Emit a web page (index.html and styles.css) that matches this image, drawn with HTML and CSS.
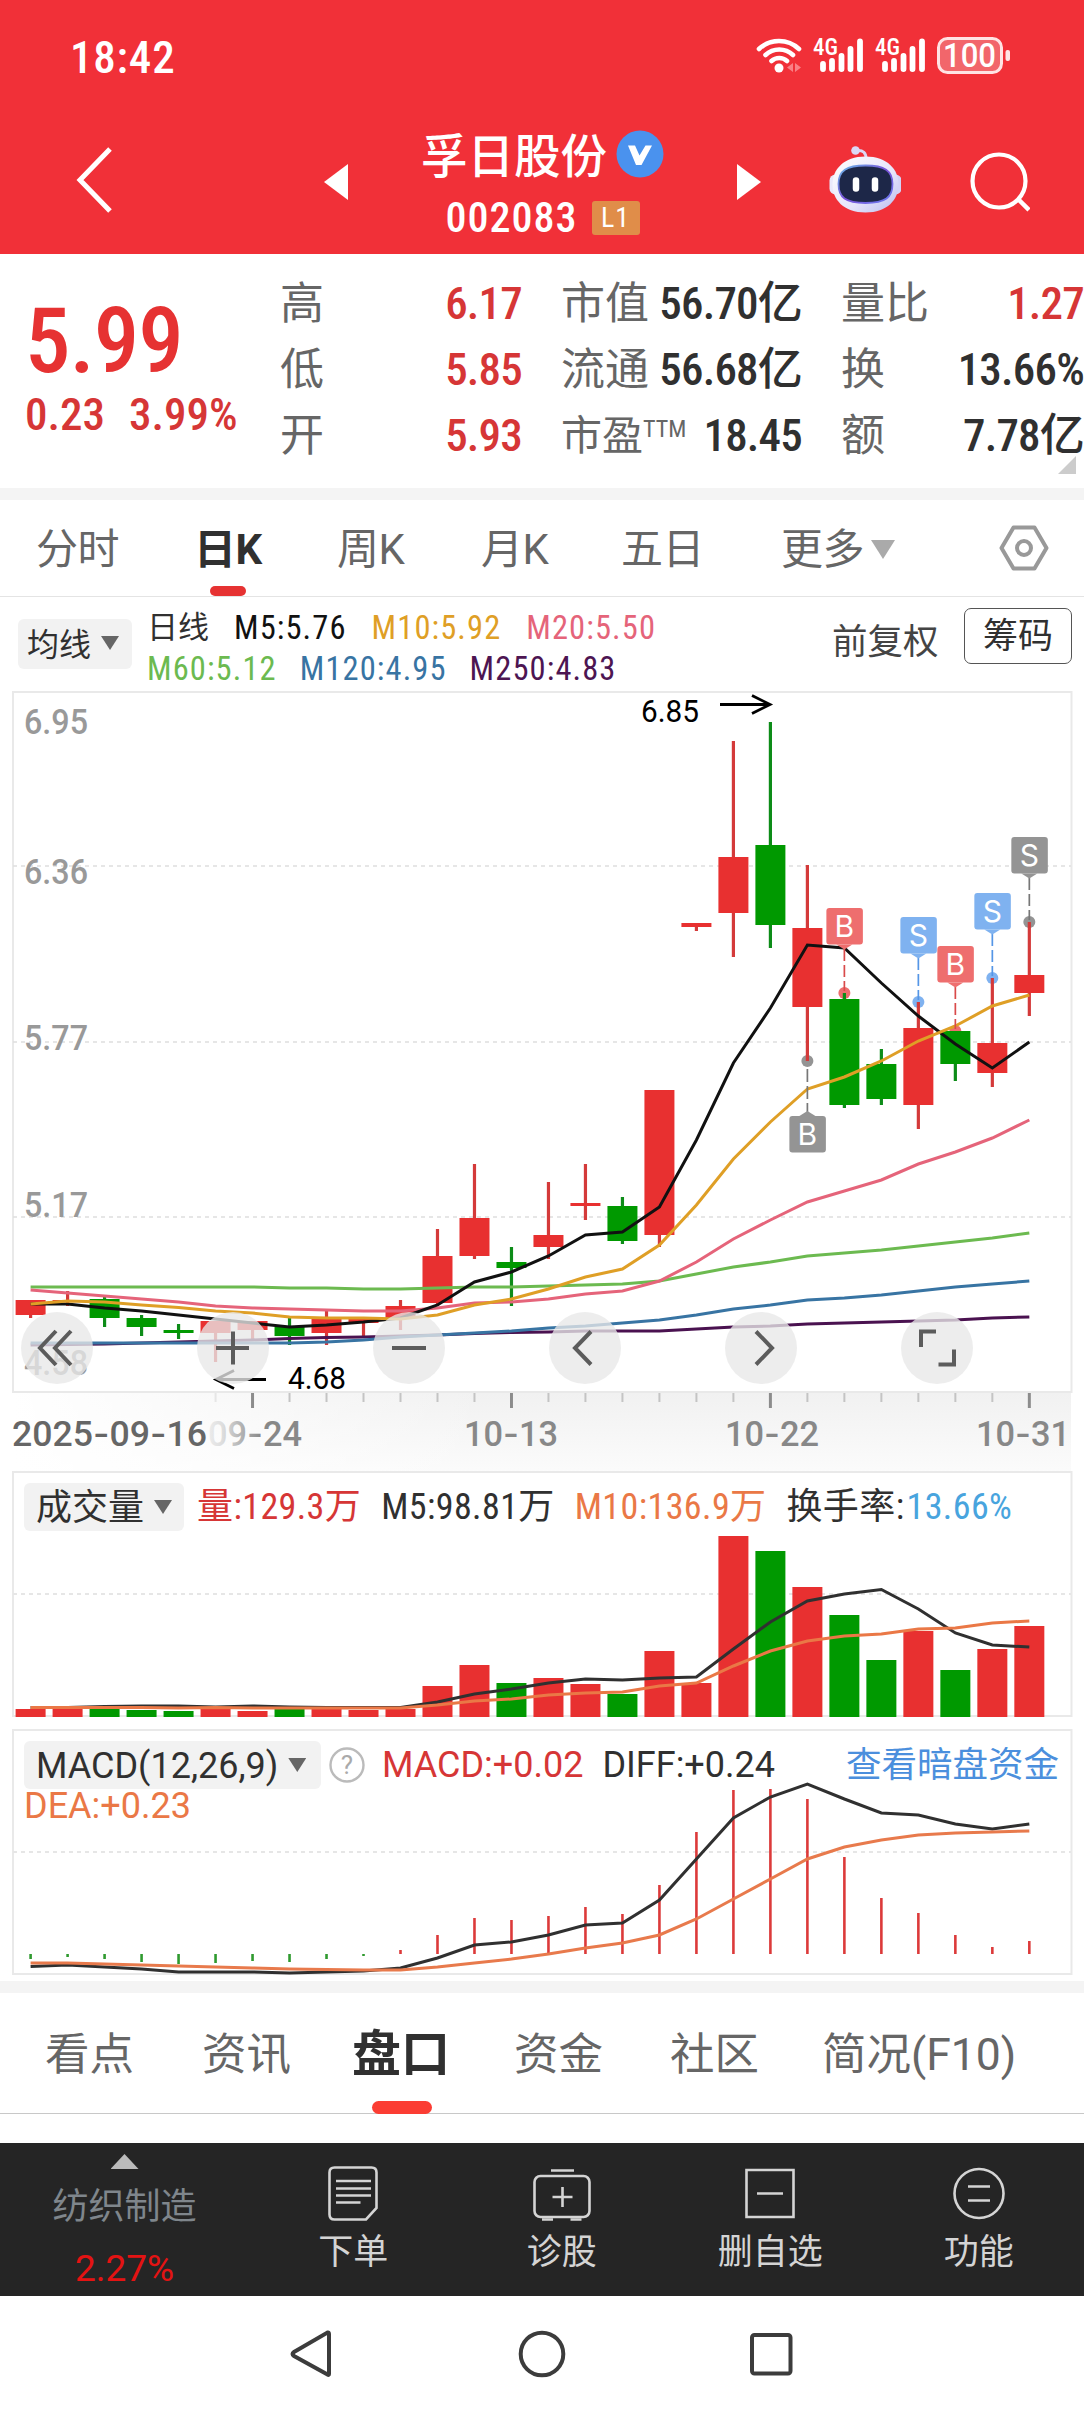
FILE: index.html
```html
<!DOCTYPE html>
<html lang="zh-CN">
<head>
<meta charset="utf-8">
<title>孚日股份 002083</title>
<link rel="stylesheet" href="styles.css">
</head>
<body>
<header class="top">
  <div class="status">
    <span class="clock">18:42</span>
    <svg class="status-icons" width="256" height="56" viewBox="756 28 256 56">
      <g fill="none" stroke="#fff" stroke-width="4.6" stroke-linecap="round">
        <path d="M759 49a29 29 0 0 1 40 0M765.500 55a20 20 0 0 1 27.500 0M771.500 61a11.500 11.500 0 0 1 15.500 0"/>
      </g>
      <circle cx="779" cy="68" r="4.500" fill="#fff"/>
      <path d="M793 63v9l-6-4.500zM795 63v9l6-4.500z" fill="#f98086"/>
      <g id="signal">
        <path d="M823 64v5M832 61v8M841.500 56v13M850.500 49v20M860 41.500v27.500" stroke="#fff" stroke-width="5.800" stroke-linecap="round"/>
        <text class="net" x="813" y="55" textLength="25" lengthAdjust="spacingAndGlyphs">4G</text>
      </g>
      <use href="#signal" x="62"/>
      <rect x="938.500" y="38.500" width="63" height="34" rx="9" fill="#f2666b" stroke="#ffe3e4" stroke-width="3"/>
      <rect x="1005.500" y="50" width="4.500" height="11" rx="2" fill="#ffe3e4"/>
      <text class="battery" x="943" y="67" textLength="53" lengthAdjust="spacingAndGlyphs">100</text>
    </svg>
  </div>
  <div class="nav">
    <svg class="back" width="40" height="66" viewBox="0 0 40 66"><path d="M35 2 5 33 35 64" fill="none" stroke="#fff" stroke-width="5"/></svg>
    <svg class="prev" width="24" height="36" viewBox="0 0 24 36"><path d="M24 0v36L0 18z" fill="#fff"/></svg>
    <div class="stock">
      <h1>孚日股份<svg width="48" height="48" viewBox="0 0 48 48"><circle cx="24" cy="24" r="23.500" fill="#4a92ee"/><path d="M12 15.500h7l4.500 10 6-10H36L25.500 35h-5.500z" fill="#fff"/></svg></h1>
      <div class="code"><span>002083</span><b>L1</b></div>
    </div>
    <svg class="next" width="24" height="36" viewBox="0 0 24 36"><path d="M0 0v36l24-18z" fill="#fff"/></svg>
    <svg class="robot" width="72" height="67" viewBox="828.500 145.500 72 67">
      <defs>
        <linearGradient id="shell" x2="1" y2="1"><stop offset="0" stop-color="#fff"/><stop offset=".6" stop-color="#e6e4fa"/><stop offset="1" stop-color="#b9bcf0"/></linearGradient>
        <linearGradient id="rim" x2="1" y2="1"><stop offset="0" stop-color="#69b9e8"/><stop offset=".5" stop-color="#7a52d8"/><stop offset="1" stop-color="#6a7cf0"/></linearGradient>
      </defs>
      <path d="M856 150q10-1 9.500 9" fill="none" stroke="#dcd8f5" stroke-width="3"/>
      <circle cx="855" cy="150" r="4.300" fill="#dcd8f5"/>
      <rect x="829" y="174" width="12" height="20" rx="6" fill="#e9e8fb"/>
      <rect x="889" y="174" width="12" height="20" rx="6" fill="#d3d2f6"/>
      <path d="M865 156c22 0 33 13 33 28s-11 28-33 28-33-13-33-28 11-28 33-28z" fill="url(#shell)"/>
      <path d="M865 165c19 0 27 5 27 18.500s-7 19-27 19-27-5.500-27-19 8-18.500 27-18.500z" fill="#1d2748" stroke="url(#rim)" stroke-width="1.800"/>
      <path d="M855.500 180v8M874.500 180v8" stroke="#fff" stroke-width="6.500" stroke-linecap="round"/>
    </svg>
    <svg class="search" width="60" height="60" viewBox="969.500 151.500 60 60"><path d="M1018 199l10.500 10.500" stroke="#fff" stroke-width="4.500"/><circle cx="998.500" cy="180.500" r="26.500" fill="none" stroke="#fff" stroke-width="4.200"/></svg>
  </div>
</header>

<section class="quote">
  <div class="price">
    <strong>5.99</strong>
    <p><span>0.23</span><span>3.99%</span></p>
  </div>
  <dl class="facts">
    <div><dt>高</dt><dd class="up">6.17</dd></div>
    <div><dt>市值</dt><dd>56.70亿</dd></div>
    <div><dt>量比</dt><dd class="up">1.27</dd></div>
    <div><dt>低</dt><dd class="up">5.85</dd></div>
    <div><dt>流通</dt><dd>56.68亿</dd></div>
    <div><dt>换</dt><dd>13.66%</dd></div>
    <div><dt>开</dt><dd class="up">5.93</dd></div>
    <div><dt class="pe">市盈<sup>TTM</sup></dt><dd>18.45</dd></div>
    <div><dt>额</dt><dd>7.78亿</dd></div>
  </dl>
  <i class="fold"></i>
</section>

<nav class="periods">
  <a>分时</a><a class="on">日K</a><a>周K</a><a>月K</a><a>五日</a><a>更多<i class="caret light"></i></a>
  <svg width="50" height="46" viewBox="0 0 50 46"><path d="M14.500 2.500h21L47.500 23 35.500 43.500h-21L2.500 23z" fill="none" stroke="#999" stroke-width="4" stroke-linejoin="round"/><circle cx="25" cy="23" r="7" fill="none" stroke="#999" stroke-width="4"/></svg>
</nav>

<section class="legend">
  <button class="tag ma">均线<i class="caret"></i></button>
  <div class="averages">
    <p><span class="name">日线</span><span class="m5">M5:5.76</span><span class="m10">M10:5.92</span><span class="m20">M20:5.50</span></p>
    <p><span class="m60">M60:5.12</span><span class="m120">M120:4.95</span><span class="m250">M250:4.83</span></p>
  </div>
  <span class="adjust">前复权</span>
  <button class="chips">筹码</button>
</section>

<section class="panel kline">
  <svg id="kline" width="1084" height="780" viewBox="0 691 1084 780"></svg>
  <div class="tools">
    <button><svg viewBox="0 0 72 72"><path d="M35 19 19 36 35 53M50 19 34 36 50 53"/></svg></button>
    <button><svg viewBox="0 0 72 72"><path d="M19 36h33M36 19.500v33"/></svg></button>
    <button><svg viewBox="0 0 72 72"><path d="M19 36h34"/></svg></button>
    <button><svg viewBox="0 0 72 72"><path d="M42 19.500 26 36 42 52.500"/></svg></button>
    <button><svg viewBox="0 0 72 72"><path d="M31 19.500 47 36 31 52.500"/></svg></button>
    <button><svg viewBox="0 0 72 72"><path d="M20 35V19.500h15M53 37.500V52.500H37.500"/></svg></button>
  </div>
</section>

<section class="panel volume">
  <svg id="volume" width="1084" height="256" viewBox="0 1471 1084 256"></svg>
  <div class="readout">
    <button class="tag">成交量<i class="caret"></i></button>
    <span class="up">量:129.3万</span><span>M5:98.81万</span><span class="orange">M10:136.9万</span><span>换手率:<em>13.66%</em></span>
  </div>
</section>

<section class="panel macd">
  <svg id="macd" width="1084" height="254" viewBox="0 1727 1084 254"></svg>
  <div class="readout">
    <button class="tag">MACD(12,26,9)<i class="caret"></i></button>
    <svg class="help" width="36" height="36" viewBox="0 0 36 36"><circle cx="18" cy="18" r="16.500" fill="none" stroke="#bbb" stroke-width="2.400"/><text x="18" y="27" text-anchor="middle">?</text></svg>
    <span class="up">MACD:+0.02</span><span>DIFF:+0.24</span><a>查看暗盘资金</a>
  </div>
  <span class="dea orange">DEA:+0.23</span>
</section>

<nav class="sections">
  <a>看点</a><a>资讯</a><a class="on">盘口</a><a>资金</a><a>社区</a><a>简况(F10)</a>
</nav>

<footer class="actions">
  <div class="sector"><i></i><span>纺织制造</span><b>2.27%</b></div>
  <div><svg width="60" height="60" viewBox="0 0 60 60"><path d="M11.500 4.500h37q5 0 5 5V45L43 56.500H11.500q-5 0-5-5v-42q0-5 5-5zM13 18h35M13 25.500h35M13 32.500h35M13 39.500h24.500"/></svg>下单</div>
  <div><svg width="60" height="60" viewBox="0 0 60 60"><rect x="2.500" y="13" width="55" height="41" rx="6"/><path d="M19 7.500h23M30.500 24v20M20.500 34h20M10 56.500h11M38.500 56.500h11"/></svg>诊股</div>
  <div><svg width="60" height="60" viewBox="0 0 60 60"><path d="M6.500 7h47v47h-47zM17 30.500h26"/></svg>删自选</div>
  <div><svg width="60" height="60" viewBox="0 0 60 60"><circle cx="30" cy="30.500" r="24.500"/><path d="M19 23.500h22M19 37.500h22"/></svg>功能</div>
</footer>

<div class="system">
  <svg width="44" height="50" viewBox="0 0 44 50"><path d="M39 5v40q0 1.500-1.500.5L4 27q-3-2 0-4L37.500 3.500Q39 3 39 5z"/></svg>
  <svg width="50" height="50" viewBox="0 0 50 50"><circle cx="25" cy="25" r="21.300"/></svg>
  <svg width="50" height="50" viewBox="0 0 50 50"><rect x="6" y="6" width="38.500" height="38.500" rx="2.500"/></svg>
</div>
<script src="script.js"></script>
</body>
</html>
```
FILE: styles.css
```css
* { box-sizing: border-box; margin: 0; padding: 0; }
body {
  width: 1084px;
  background: #fff;
  color: #303030;
  font-family: "Roboto Condensed", "Noto Sans CJK SC", sans-serif;
  font-size: 36px;
  line-height: 1;
}
svg { display: block; flex: none; }
button { border: 0; background: none; color: inherit; font: inherit; }
i, em { font-style: normal; }
.up { color: #d63636; }
.orange { color: #ea7846; }

/* Header */
.top { height: 254px; background: #f13038; color: #fff; }
.status { display: flex; justify-content: space-between; align-items: center; height: 114px; padding: 0 72px 0 70px; }
.clock { font-size: 45px; font-weight: 500; letter-spacing: .8px; }
.status-icons { margin-top: -2px; }
.net { font: 500 23px "Roboto Condensed", sans-serif; fill: #fff; }
.battery { font: 500 33px Roboto, sans-serif; fill: #fff; }
.nav { display: flex; align-items: center; height: 140px; padding-left: 75px; }
.back { margin-top: -8px; }
.prev { margin: -4px 0 0 209px; }
.next { margin-top: -4px; }
.stock { width: 389px; display: flex; flex-direction: column; align-items: center; gap: 24px; margin-top: -4px; }
.stock h1 { display: flex; align-items: center; gap: 9px; height: 48px; font-size: 46.5px; font-weight: 500; font-family: "Noto Sans CJK SC", sans-serif; line-height: 48px; }
.stock h1 svg { margin-top: 1px; }
.code { display: flex; align-items: center; gap: 14px; height: 34px; font-size: 42px; font-weight: 500; letter-spacing: 1px; }
.code b { width: 48px; height: 34px; border-radius: 3px; background: #e08d49; font-size: 28px; font-weight: 400; line-height: 34px; text-align: center; }
.robot { margin: -9px 0 0 68px; }
.search { margin: -4px 0 0 69px; }

/* Quote */
.quote { display: flex; position: relative; height: 234px; }
.price { width: 280px; padding: 41px 0 0 25px; color: #e63232; }
.price strong { display: block; height: 92px; font-size: 91px; font-weight: 500; line-height: 92px; letter-spacing: -1px; }
.price p { display: flex; gap: 24px; margin-top: 5px; font-size: 45px; font-weight: 500; line-height: 46px; color: #d63636; }
.facts { display: grid; grid-template-columns: 242px 241px 243px; grid-auto-rows: 66px; column-gap: 39px; padding-top: 17px; font-size: 45px; line-height: 66px; width: 804px; }
.facts div { display: flex; justify-content: space-between; white-space: nowrap; }
.facts dt { font-size: 44px; color: #666; }
.facts dd { font-weight: 500; letter-spacing: -.8px; }
.facts .pe { font-size: 41px; }
.facts sup { font-size: 24px; line-height: 0; vertical-align: 13px; }
.fold { position: absolute; right: 8px; top: 202px; width: 18px; height: 18px; background: #ccc; clip-path: polygon(100% 0, 100% 100%, 0 100%); }

/* Period tabs */
.periods { display: grid; grid-template-columns: 158px 143px 144px 140px 160px 1fr auto; align-items: center; height: 109px; padding: 0 35px 0 36px; border-top: 12px solid #f4f4f4; border-bottom: 1px solid #e4e4e4; font-size: 42px; line-height: 92px; color: #666; }
.periods a { padding-top: 4px; font-family: Roboto, "Noto Sans CJK SC", sans-serif; letter-spacing: -.5px; }
.periods .on { position: relative; font-weight: 700; color: #303030; }
.periods .on::after { content: ""; position: absolute; left: 16px; bottom: 0; width: 36px; height: 10px; border-radius: 5px; background: #e63232; }
.caret { display: inline-block; width: 18px; height: 14px; margin-left: 10px; background: #666; clip-path: polygon(0 0, 100% 0, 50% 100%); vertical-align: 6px; }
.caret.light { width: 24px; height: 19px; background: #aaa; vertical-align: 5px; margin-left: 7px; }

/* Moving-average legend */
.legend { display: flex; height: 94px; padding: 9px 12px 0 18px; }
.tag { height: 48px; padding: 0 12px; border-radius: 6px; background: #f2f2f2; white-space: nowrap; text-align: left; line-height: 50px; }
.tag.ma { width: 114px; height: 50px; margin-top: 13px; padding: 0 0 0 9px; font-size: 32px; line-height: 52px; }
.averages { width: 700px; padding: 1px 0 0 15px; font-size: 32.5px; letter-spacing: 1.1px; }
.averages p { display: flex; gap: 25px; height: 41px; line-height: 42px; }
.averages p + p { gap: 23px; }
.averages .name { font-size: 31px; letter-spacing: 0; }
.m5 { color: #111; } .m10 { color: #df9f26; } .m20 { color: #e5647a; }
.m60 { color: #6cba50; } .m120 { color: #3874a3; } .m250 { color: #4d1552; }
.adjust { width: 132px; font-size: 35.5px; line-height: 72px; color: #444; }
.chips { width: 108px; height: 56px; margin-top: 2px; border: 1.500px solid #555; border-radius: 7px; font-size: 35px; line-height: 55px; }

/* Chart panels */
.panel { display: grid; }
.panel > * { grid-area: 1 / 1; }
.kline { height: 780px; }
.tools { display: flex; gap: 104px; padding: 621px 0 0 21px; height: 693px; }
.tools button { width: 72px; height: 72px; border-radius: 50%; background: rgba(232, 232, 232, .78); }
.tools svg { fill: none; stroke: #5c5c5c; stroke-width: 4; }
.axis { font-family: Roboto, sans-serif; font-size: 35px; }
.scale { font: 500 35px Roboto, sans-serif; fill: #999; }
.peak { font: 31px Roboto, sans-serif; fill: #000; }
.marker { font: 30px Inter, sans-serif; fill: #fff; }
.readout { display: flex; align-items: center; gap: 20px; height: 48px; margin: 12px 0 0 24px; letter-spacing: .4px; line-height: 50px; white-space: nowrap; }
.readout .tag { margin-right: -7px; letter-spacing: 0; }
.readout em { margin-left: 2px; color: #48a4de; }
.volume { height: 256px; }
.macd { height: 254px; font-family: Roboto, "Noto Sans CJK SC", sans-serif; }
.macd .readout { margin-top: 14px; padding-right: 25px; gap: 19px; letter-spacing: 0; }
.macd .tag { width: 297px; }
.macd .help { margin: 0 -2px 0 -4px; }
.help text { font: 26px Roboto, sans-serif; fill: #aaa; }
.macd a { margin-left: auto; font-size: 35.500px; color: #4b8fdd; }
.dea { margin: 59px 0 0 24px; line-height: 40px; height: 40px; }

/* Section tabs */
.sections { display: grid; grid-template-columns: 157px 150px 162px 156px 152px 1fr; height: 162px; padding-left: 45px; border-top: 12px solid #f4f4f4; font-family: Roboto, "Noto Sans CJK SC", sans-serif; font-size: 44.500px; line-height: 124px; color: #666; white-space: nowrap; background: linear-gradient(#c8c8c8, #c8c8c8) 0 120px / 100% 1px no-repeat; }
.sections .on { position: relative; font-size: 49px; font-weight: 700; color: #303030; }
.sections .on::after { content: ""; position: absolute; left: 20px; top: 108px; width: 60px; height: 13px; border-radius: 6.500px; background: #fb3d33; }

/* Action bar */
.actions { display: grid; grid-template-columns: 249px repeat(4, 208.500px); height: 153px; background: #252525; color: #d4d4d4; font-size: 35px; line-height: 40px; }
.actions div { display: flex; flex-direction: column; align-items: center; padding-top: 20px; gap: 10px; }
.actions svg { fill: none; stroke: #d4d4d4; stroke-width: 2.600; }
.actions .sector { padding-top: 11px; gap: 0; color: #7f868c; font-size: 36px; }
.sector i { width: 28px; height: 15px; background: #bbb; clip-path: polygon(50% 0, 100% 100%, 0 100%); }
.sector span { margin-top: 18px; }
.sector b { margin-top: 22px; font: 37px/40px Roboto, sans-serif; color: #e41313; }

/* System navigation */
.system { display: flex; height: 116px; padding: 33px 0 0 290px; }
.system svg { fill: none; stroke: #3c3c3c; stroke-width: 4; margin-right: 183px; }
.system svg:nth-child(2) { margin-right: 178.500px; }
```
FILE: script.js
```js
const RED = '#e83030', GREEN = '#009900';
const x = i => 30.6 + 36.99 * i;
const line = (x1, y1, x2, y2, stroke, width, extra = '') =>
  `<line x1="${x1}" y1="${y1}" x2="${x2}" y2="${y2}" stroke="${stroke}" stroke-width="${width}" ${extra}/>`;
const rect = (left, top, w, h, fill, extra = '') =>
  `<rect x="${left}" y="${top}" width="${w}" height="${h}" fill="${fill}" ${extra}/>`;
const curve = (ys, stroke) =>
  `<polyline points="${ys.map((y, i) => x(i) + ',' + y).join(' ')}" fill="none" stroke="${stroke}" stroke-width="3"/>`;
const frame = (top, bottom) =>
  `<rect x="13" y="${top}" width="1058.500" height="${bottom - top}" fill="none" stroke="#e9e9e9" stroke-width="2"/>`;
const text = (cls, left, base, width, value, extra = '') =>
  `<text class="${cls}" x="${left}" y="${base}" textLength="${width}" lengthAdjust="spacingAndGlyphs" ${extra}>${value}</text>`;

// [body top, body bottom, high, low, rising]
const candles = [
  [1300,1315,1300,1318,1],[1300,1302,1291,1306,1],[1299,1318,1297,1327,0],[1318,1327,1315,1336,0],
  [1330,1333,1324,1339,0],[1321,1333,1321,1362,1],[1321,1330,1321,1339,1],[1327,1336,1318,1345,0],
  [1318,1333,1311,1345,1],[1318,1323,1318,1337,1],[1306,1318,1300,1330,1],[1256,1303,1229,1306,1],
  [1218,1256,1164,1259,1],[1262,1268,1247,1306,0],[1235,1247,1182,1259,1],[1203,1206,1164,1220,1],
  [1206,1241,1197,1244,0],[1090,1235,1090,1247,1],[923,927,923,931,1],[857,913,741,957,1],
  [845,925,722,948,0],[928,1007,865,1061,1],[999,1105,993,1108,0],[1064,1099,1049,1105,0],
  [1028,1105,1002,1129,1],[1031,1064,1031,1081,0],[1043,1073,978,1087,1],[975,993,922,1016,1]
];
const averages = [
  ['#4a1250', [1345,1344.5,1344,1343,1342,1341,1340,1338.500,1337.500,1337,1336,1335,1333.500,1332.500,1332,1331,1331,1331,1329,1327,1326,1324,1323,1322,1321,1320,1318,1317]],
  ['#3874a3', [1343,1343,1343,1343,1343,1343,1343,1343,1342,1340,1337,1335,1333,1331,1328,1326,1323,1320,1315,1309,1305,1300,1298,1295,1291,1287,1284,1281]],
  ['#6cba50', [1287,1287,1287,1287,1287,1287,1287,1288,1288,1289,1289,1288,1287,1287,1286,1285,1284,1281,1274,1267,1262,1256,1253,1250,1246,1242,1238,1233]],
  ['#e5647a', [1290,1293,1296,1299,1302,1306,1308,1309,1310,1311,1311,1308,1303,1302,1299,1294,1291,1281,1262,1239,1220,1202,1191,1180,1164,1152,1138,1120]],
  ['#111', [1304,1304,1308,1311,1315,1319,1323,1327,1325,1322,1318,1305,1282,1272,1256,1235,1232,1207,1140,1063,1008,945,948,983,1016,1044,1068,1042]],
  ['#df9f26', [1304,1301,1302,1305,1307.5,1311,1313,1317,1318,1318,1319,1315,1305,1299,1289,1277,1269,1245,1205,1159,1122,1089,1077,1061,1041,1026,1006,995]]
];
// [index, letter, badge top, point, fill, line]
const markers = [
  [21,'B',1116,1061,'#949494','#777'],[22,'B',908,993,'#ee6e6e','#d94a4a'],[24,'S',917,1002,'#7fb2f0','#5596e6'],
  [25,'B',946,1031,'#ee6e6e','#d94a4a'],[26,'S',893,978,'#7fb2f0','#5596e6'],[27,'S',837,922,'#949494','#777']
];

let k = `<defs>
  <linearGradient id="axisY" x1="0" x2="0" y1="0" y2="1"><stop offset="0" stop-color="#f1f1f1"/><stop offset="1" stop-color="#fcfcfc"/></linearGradient>
  <linearGradient id="axisX"><stop offset="0" stop-color="#fff"/><stop offset=".45" stop-color="#fff" stop-opacity="0"/></linearGradient>
  <linearGradient id="dateFade" gradientUnits="userSpaceOnUse" x1="206" x2="262" y1="0" y2="0"><stop offset="0" stop-color="#eee"/><stop offset=".3" stop-color="#ddd"/><stop offset=".7" stop-color="#aaa"/><stop offset="1" stop-color="#888"/></linearGradient>
</defs>`;
k += rect(13, 1393, 1058, 84, 'url(#axisY)') + rect(13, 1393, 1058, 84, 'url(#axisX)');
k += frame(692, 1392);
[866, 1042, 1217].forEach(y => k += line(13, y, 1071, y, '#dedede', 1.5, 'stroke-dasharray="4 4"'));
candles.forEach(([top, bottom, high, low, rising], i) => {
  const fill = rising ? RED : GREEN;
  const mark = markers.find(m => m[0] === i);
  if (mark) k += `<circle cx="${x(i)}" cy="${mark[3]}" r="6" fill="${mark[4]}"/>`;
  k += line(x(i), high, x(i), low, rising ? '#d43a3a' : '#0d8c18', 3.2) + rect(x(i) - 15, top, 30, bottom - top, fill);
});
averages.forEach(([stroke, ys]) => k += curve(ys, stroke));
markers.forEach(([i, letter, top, point, fill, stroke]) => {
  const c = x(i), up = top > point;
  k += up ? line(c, point + 8, c, top - 4, stroke, 1.7, 'stroke-dasharray="13 4"')
          : line(c, top + 41, c, point - 2, stroke, 1.7, 'stroke-dasharray="12 4"');
  k += rect(c - 18, top, 36.5, 36.5, fill, 'rx="3"');
  k += up ? `<path d="M${c - 8} ${top}l8-5 8 5z" fill="${fill}"/>` : `<path d="M${c - 8} ${top + 36.5}l8 5 8-5z" fill="${fill}"/>`;
  k += `<text class="marker" x="${c}" y="${top + 29}" text-anchor="middle">${letter}</text>`;
});
[['6.95', 734], ['6.36', 884], ['5.77', 1050], ['5.17', 1217], ['4.58', 1375]].forEach(([v, y]) => k += text('scale', 24, y, 64, v));
k += text('peak', 641, 722, 58, '6.85') + text('peak', 288, 1389, 58, '4.68');
k += `<path d="M720 704.500h50M752 695.500l18 9-18 9M266 1379.500h-50M234 1370.500l-18 9 18 9" fill="none" stroke="#000" stroke-width="2.800"/>`;
for (let i = 5; i < 28; i++) {
  const major = (i - 6) % 7 === 0;
  k += line(x(i), 1393, x(i), major ? 1408 : 1402, major ? '#8c8c8c' : i === 5 ? '#e6e6e6' : '#c4c4c4', major ? 3 : 2);
}
const dash = s => s.replace(/-/g, '<tspan font-family="Inter">-</tspan>');
k += text('axis', 12, 1446, 195, dash('2025-09-16'), 'fill="#666" font-weight="500"');
k += text('axis', 208, 1446, 94, dash('09-24'), 'fill="url(#dateFade)" font-weight="500"');
[['10-13', 464], ['10-22', 725], ['10-31', 976]].forEach(([v, left]) => k += text('axis', left, 1446, 94, dash(v), 'fill="#888" font-weight="500"'));
document.getElementById('kline').innerHTML = k;

const volTops = [1709,1709,1709,1710,1711,1709,1711,1709,1709,1710,1709,1686,1665,1683,1678,1684,1694,1651,1683,1536,1551,1587,1615,1660,1631,1670,1649,1626];
let v = frame(1472, 1716) + line(13, 1594, 1071, 1594, '#e6e6e6', 2, 'stroke-dasharray="4 4"');
volTops.forEach((top, i) => v += rect(x(i) - 15, top, 30, 1717 - top, candles[i][4] ? RED : GREEN));
v += curve([1707.5,1707.5,1706.5,1706,1706,1707,1706,1707,1707.5,1707.5,1707.5,1702,1694,1689,1683,1679,1680,1678,1677,1649,1622,1601,1594,1589.5,1609,1633,1645,1647], '#303030');
v += curve([1707.5,1707.5,1707.5,1707.5,1708,1707.5,1708,1708,1708,1708,1708,1705,1701,1699,1695,1693,1692,1686,1683,1666,1651,1641,1636,1634,1629,1628,1623,1621], '#ea7846');
document.getElementById('volume').innerHTML = v;

const hist = [1959,1957,1959,1962,1964,1963,1961,1962,1959,1956,1950,1935,1918,1920,1916,1907,1914,1885,1832,1790,1789,1799,1857,1898,1913,1935,1947,1941];
let m = frame(1730, 1974) + line(13, 1852, 1071, 1852, '#e6e6e6', 2, 'stroke-dasharray="4 4"');
hist.forEach((y, i) => m += line(x(i), 1954, x(i), y, i < 10 ? '#2f9a2f' : '#dc3a3a', 2.6));
m += curve([1966.5,1965,1967,1969,1972,1972,1972,1973,1972,1971,1968,1958,1945,1942,1935,1925,1923,1900,1859,1818,1797,1784,1799,1813,1815,1824,1829,1824], '#303030');
m += curve([1963,1963,1964,1965,1966,1967,1968,1969,1969.5,1970,1970,1967,1963,1959,1954,1948,1943,1935,1919,1899,1879,1859,1847,1840,1835,1833,1832,1831], '#e87a4c');
document.getElementById('macd').innerHTML = m;
```
